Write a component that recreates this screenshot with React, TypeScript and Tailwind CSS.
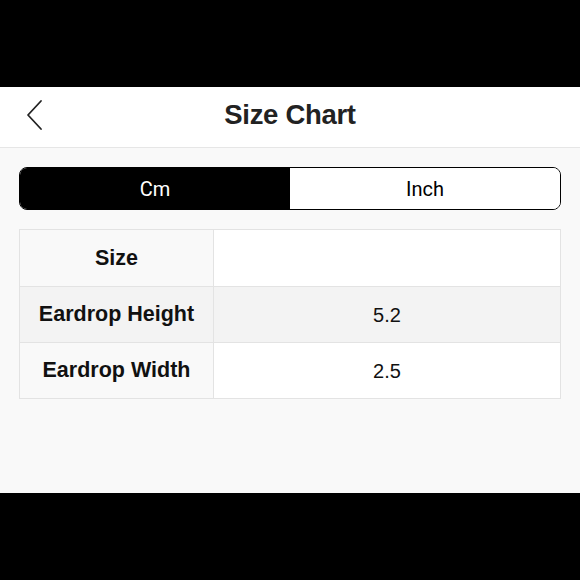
export default function App() {
  const rows = [
    { label: 'Size', value: '', bg: 'bg-white', labelBg: 'bg-[#f9f9f9]' },
    { label: 'Eardrop Height', value: '5.2', bg: 'bg-[#f3f3f3]', labelBg: 'bg-[#f3f3f3]' },
    { label: 'Eardrop Width', value: '2.5', bg: 'bg-white', labelBg: 'bg-[#f9f9f9]' },
  ];

  return (
    <div className="w-[580px] h-[580px] bg-black flex flex-col">
      <div className="h-[87px] bg-black" />
      <div className="h-[406px] flex flex-col bg-[#f9f9f9]">
        {/* Header */}
        <div className="relative h-[61px] bg-white border-b border-[#e6e6e6] flex items-center justify-center pb-[4px]">
          <button className="absolute left-[22px] top-[8px] p-1">
            <svg width="20" height="32" viewBox="0 0 20 32" fill="none">
              <path d="M15 2L2 16L15 30" stroke="#222" strokeWidth="1.8" strokeLinecap="round" strokeLinejoin="round" />
            </svg>
          </button>
          <h1 className="text-[27.5px] font-bold text-[#222] font-['Liberation_Sans',Arial,sans-serif] tracking-[-0.3px]">Size Chart</h1>
        </div>

        <div className="px-[19px] pt-[19px]">
          {/* Segmented control */}
          <div className="flex h-[43px] rounded-[8px] border-[1.5px] border-black overflow-hidden font-['Roboto',sans-serif] text-[20px]">
            <div className="flex-1 bg-black text-white flex items-center justify-center">Cm</div>
            <div className="flex-1 bg-white text-black flex items-center justify-center">Inch</div>
          </div>

          {/* Table */}
          <div className="mt-[19px] border border-[#e3e3e3] font-['Liberation_Sans',Arial,sans-serif] text-[#111]">
            {rows.map((r, i) => (
              <div key={r.label} className={`flex h-[56px] ${i > 0 ? 'border-t border-[#e3e3e3]' : ''}`}>
                <div className={`w-[194px] border-r border-[#e3e3e3] flex items-center justify-center font-bold text-[21.5px] ${r.labelBg}`}>
                  {r.label}
                </div>
                <div className={`flex-1 flex items-center justify-center text-[20px] ${r.bg}`}>{r.value}</div>
              </div>
            ))}
          </div>
        </div>
      </div>
      <div className="flex-1 bg-black" />
    </div>
  );
}
